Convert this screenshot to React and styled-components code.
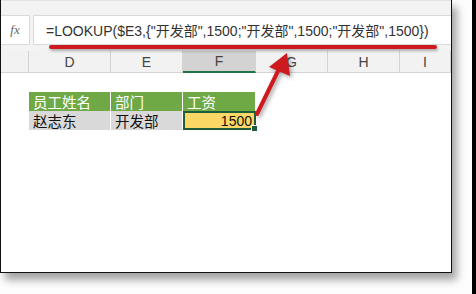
import React from 'react'
import styled, { createGlobalStyle } from 'styled-components'

const GlobalStyle = createGlobalStyle`
  html, body {
    margin: 0;
    padding: 0;
    background: #ffffff;
  }
  body {
    font-family: "Liberation Sans", "Noto Sans CJK SC", sans-serif;
  }
`

const Page = styled.div`
  position: relative;
  width: 476px;
  height: 294px;
  overflow: hidden;
  background: #fdfdfd;
  border-right: 4px solid #000;
  box-sizing: border-box;
`

const Frame = styled.div`
  position: relative;
  width: 452px;
  height: 273px;
  box-sizing: border-box;
  border: 1.5px solid #111;
  border-top: none;
  background: #ffffff;
  box-shadow: 5px 7px 8px rgba(0, 0, 0, 0.35);
  display: flex;
  flex-direction: column;
  overflow: hidden;
`

const FormulaBar = styled.div`
  display: flex;
  gap: 3px;
  padding-top: 14px;
  padding-bottom: 6px;
  background: #f3f3f3;
  border-top: 1px solid #e2e2e2;
`

const FxBox = styled.div`
  width: 29px;
  height: 30px;
  box-sizing: border-box;
  border: 1px solid #dadada;
  border-left: none;
  background: #ffffff;
  display: flex;
  align-items: center;
  justify-content: center;
  font-family: "Liberation Serif", serif;
  font-style: italic;
  font-size: 13px;
  color: #666;
`

const Input = styled.div`
  flex: 1;
  height: 30px;
  box-sizing: border-box;
  border: 1px solid #dadada;
  border-right: none;
  background: #ffffff;
  display: flex;
  align-items: center;
  padding-left: 12px;
  font-size: 14px;
  color: #333;
  white-space: nowrap;
`

const Underline = styled.div`
  position: absolute;
  left: 48px;
  top: 45px;
  width: 388px;
  height: 4px;
  border-radius: 2px;
  background: #cc1a1f;
  box-shadow: 1px 2px 3px rgba(0, 0, 0, 0.3);
`

const Grid = styled.div`
  display: grid;
  grid-template-columns: 28px 82px 72px 73px 72px 72px 1fr;
`

const HeadCell = styled.div`
  height: 22px;
  box-sizing: border-box;
  background: ${p => (p.$active ? '#d3d3d3' : '#f2f2f2')};
  border-right: 1px solid #d4d4d4;
  border-bottom: ${p => (p.$active ? '2px solid #217346' : '1px solid #d4d4d4')};
  display: flex;
  align-items: center;
  justify-content: center;
  font-size: 14px;
  color: #444;
`

const Sheet = styled.div`
  display: grid;
  grid-template-columns: 28px 82px 72px 73px;
  grid-auto-rows: 19px;
  padding-top: 19px;
`

const Cell = styled.div`
  box-sizing: border-box;
  display: flex;
  align-items: center;
  justify-content: ${p => (p.$num ? 'flex-end' : 'flex-start')};
  padding: 0 4px;
  font-size: 14.5px;
  color: ${p => (p.$head ? '#ffffff' : '#111')};
  background: ${p => p.$bg || 'transparent'};
  border-right: ${p => (p.$bg ? '1px solid #ffffff' : 'none')};
`

const Selected = styled(Cell)`
  position: relative;
  border: 2px solid #1f5e3a;
  font-size: 14px;
  padding-right: 2px;
`

const Handle = styled.span`
  position: absolute;
  right: -4px;
  bottom: -4px;
  width: 5px;
  height: 5px;
  background: #1f5e3a;
  border: 1px solid #fff;
`

const Arrow = styled.svg`
  position: absolute;
  left: 0;
  top: 0;
  filter: drop-shadow(2px 2px 2px rgba(0, 0, 0, 0.35));
`

const cols = ['', 'D', 'E', 'F', 'G', 'H', 'I']
const formula = '=LOOKUP($E3,{"开发部",1500;"开发部",1500;"开发部",1500})'

export default function App() {
  return (
    <>
      <GlobalStyle />
      <Page>
        <Frame>
          <FormulaBar>
            <FxBox>fx</FxBox>
            <Input>{formula}</Input>
          </FormulaBar>
          <Grid>
            {cols.map(c => (
              <HeadCell key={c || 'corner'} $active={c === 'F'}>{c}</HeadCell>
            ))}
          </Grid>
          <Sheet>
            <span />
            <Cell $head $bg="#6fa946">员工姓名</Cell>
            <Cell $head $bg="#6fa946">部门</Cell>
            <Cell $head $bg="#6fa946">工资</Cell>
            <span />
            <Cell $bg="#d9d9d9">赵志东</Cell>
            <Cell $bg="#d9d9d9">开发部</Cell>
            <Selected $num $bg="#fbd766">1500<Handle /></Selected>
          </Sheet>
          <Underline />
        </Frame>
        <Arrow width="476" height="294" viewBox="0 0 476 294">
          <line x1="257" y1="114" x2="279" y2="69" stroke="#cc1a1f" strokeWidth="4" strokeLinecap="round" />
          <polygon points="287,53 290,76 269,67" fill="#cc1a1f" />
        </Arrow>
      </Page>
    </>
  )
}
